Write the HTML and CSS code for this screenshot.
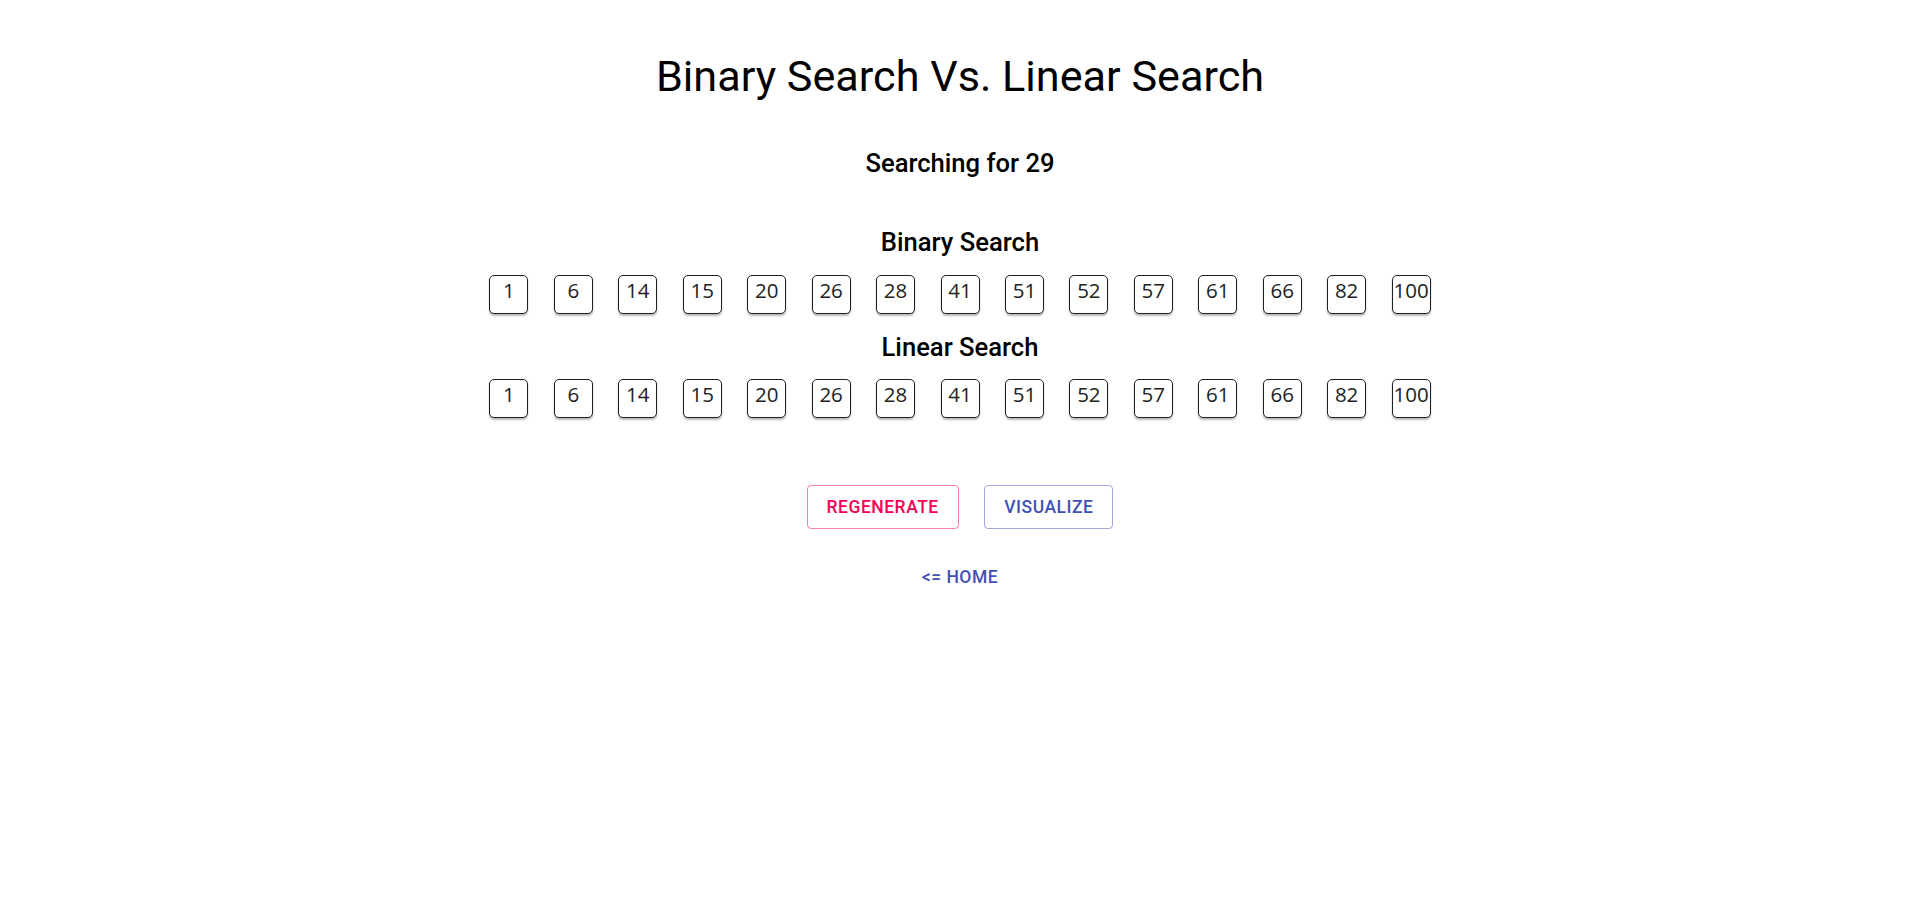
FILE: index.html
```html
<!DOCTYPE html>
<html lang="en">
<head>
<meta charset="utf-8">
<title>Binary Search Vs. Linear Search</title>
<link rel="stylesheet" href="styles.css">
</head>
<body>
<main class="page">
  <h1 class="title">Binary Search Vs. Linear Search</h1>
  <h2 class="target">Searching for 29</h2>

  <h3 class="section-title first">Binary Search</h3>
  <div class="row row-binary">
    <div class="cell">1</div><div class="cell">6</div><div class="cell">14</div><div class="cell">15</div><div class="cell">20</div><div class="cell">26</div><div class="cell">28</div><div class="cell">41</div><div class="cell">51</div><div class="cell">52</div><div class="cell">57</div><div class="cell">61</div><div class="cell">66</div><div class="cell">82</div><div class="cell">100</div>
  </div>

  <h3 class="section-title second">Linear Search</h3>
  <div class="row row-linear">
    <div class="cell">1</div><div class="cell">6</div><div class="cell">14</div><div class="cell">15</div><div class="cell">20</div><div class="cell">26</div><div class="cell">28</div><div class="cell">41</div><div class="cell">51</div><div class="cell">52</div><div class="cell">57</div><div class="cell">61</div><div class="cell">66</div><div class="cell">82</div><div class="cell">100</div>
  </div>

  <div class="actions">
    <button class="btn btn-secondary" type="button">Regenerate</button>
    <button class="btn btn-primary" type="button">Visualize</button>
  </div>

  <a class="home-link" href="#">&lt;= Home</a>
</main>
</body>
</html>
```

FILE: styles.css
```css
html, body {
  margin: 0;
  padding: 0;
  background: #ffffff;
}

body {
  font-family: Roboto, "Liberation Sans", Arial, sans-serif;
  color: rgba(0, 0, 0, 0.87);
}

.page {
  display: flex;
  flex-direction: column;
  align-items: center;
}

.title {
  margin: 50.5px 0 0;
  font-size: 43.2px;
  font-weight: 400;
  line-height: 52px;
  color: #000;
}

.target {
  margin: 45.5px 0 0;
  font-size: 25.6px;
  font-weight: 500;
  line-height: 30px;
  color: #000;
}

.section-title {
  margin: 0;
  font-size: 25.6px;
  font-weight: 500;
  line-height: 30px;
  color: #000;
}

.section-title.first {
  margin-top: 49px;
}

.section-title.second {
  margin-top: 18px;
}

.row {
  display: flex;
  gap: 25.45px;
}

.row-binary {
  margin-top: 17.5px;
}

.row-linear {
  margin-top: 17.5px;
}

.cell {
  box-sizing: border-box;
  width: 39px;
  height: 39px;
  border: 1px solid #1e1e1e;
  border-radius: 5px;
  box-shadow: 0 2px 2px rgba(0, 0, 0, 0.28);
  font-family: "Open Sans", "Noto Sans", sans-serif;
  font-size: 20.5px;
  line-height: 28px;
  text-align: center;
  color: #222;
  background: #fff;
}

.actions {
  display: flex;
  gap: 25.6px;
  margin-top: 67px;
}

.btn {
  box-sizing: border-box;
  height: 44px;
  padding: 7px 19px;
  border-radius: 4px;
  background: transparent;
  font-family: Roboto, "Liberation Sans", Arial, sans-serif;
  font-size: 17.5px;
  font-weight: 500;
  line-height: 28px;
  letter-spacing: 0.5px;
  text-transform: uppercase;
  cursor: pointer;
}

.btn-secondary {
  color: #f50057;
  border: 1px solid rgba(245, 0, 87, 0.5);
}

.btn-primary {
  color: #3f51b5;
  border: 1px solid rgba(63, 81, 181, 0.5);
}

.home-link {
  margin-top: 28px;
  padding: 6px 8px;
  font-size: 17.5px;
  font-weight: 500;
  line-height: 28px;
  letter-spacing: 0.5px;
  text-transform: uppercase;
  text-decoration: none;
  color: #3f51b5;
}
```
